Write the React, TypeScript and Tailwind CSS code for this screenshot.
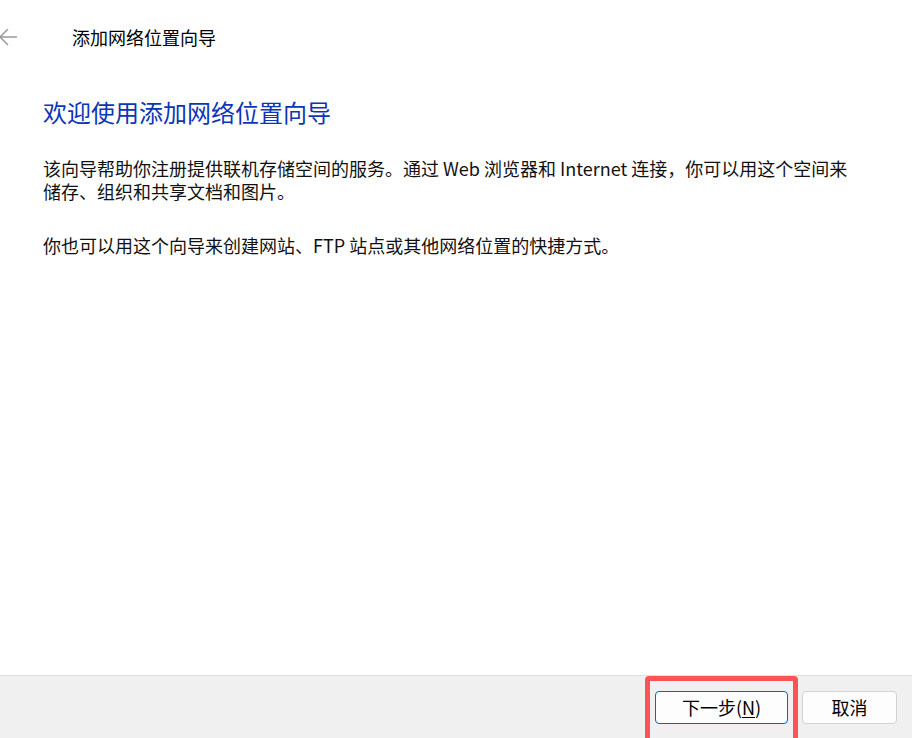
import React from "react";

const font = { fontFamily: '"Noto Sans CJK SC", "Noto Sans", sans-serif' };

function BackArrow() {
  return (
    <svg width="20" height="18" viewBox="0 0 20 18" className="text-[#9a9a9a]">
      <path
        d="M17.5 9H1M8.5 1.5L1 9L8.5 16.5"
        fill="none"
        stroke="currentColor"
        strokeWidth="1.5"
        strokeLinecap="round"
        strokeLinejoin="round"
      />
    </svg>
  );
}

export default function App() {
  return (
    <div
      className="relative flex h-[738px] w-[912px] flex-col overflow-hidden bg-white text-black"
      style={font}
    >
      <div className="flex h-[73px] items-center">
        <div className="-ml-[1px] w-[73px]">
          <BackArrow />
        </div>
        <span className="text-[18px] leading-none">添加网络位置向导</span>
      </div>

      <main className="flex-1 pl-[43px] pr-[56px]">
        <h1 className="mt-[23px] text-[24px] leading-[32px] text-[#0b36b8]">
          欢迎使用添加网络位置向导
        </h1>
        <p className="mt-[29px] text-[18px] leading-[23px] text-[#111]">
          该向导帮助你注册提供联机存储空间的服务。通过 Web 浏览器和 Internet 连接，你可以用这个空间来储存、组织和共享文档和图片。
        </p>
        <p className="mt-[31px] text-[18px] leading-[23px] text-[#111]">
          你也可以用这个向导来创建网站、FTP 站点或其他网络位置的快捷方式。
        </p>
      </main>

      <footer className="flex h-[63px] items-center justify-end gap-[14px] border-t border-[#dfdfdf] bg-[#f0f0f0] pr-[15px]">
        <button className="h-[33px] w-[133px] rounded-[4px] border border-[#0067c0] bg-[#fdfdfd] text-[18px] leading-none">
          下一步(<span className="underline underline-offset-2">N</span>)
        </button>
        <button className="h-[33px] w-[95px] rounded-[4px] border border-[#d3d3d3] bg-[#fdfdfd] text-[18px] leading-none">
          取消
        </button>
      </footer>

      {/* annotation highlight */}
      <div className="pointer-events-none absolute left-[645px] top-[676px] h-[70px] w-[153px] rounded-[4px] border-[5px] border-[#fc5454]" />
    </div>
  );
}
